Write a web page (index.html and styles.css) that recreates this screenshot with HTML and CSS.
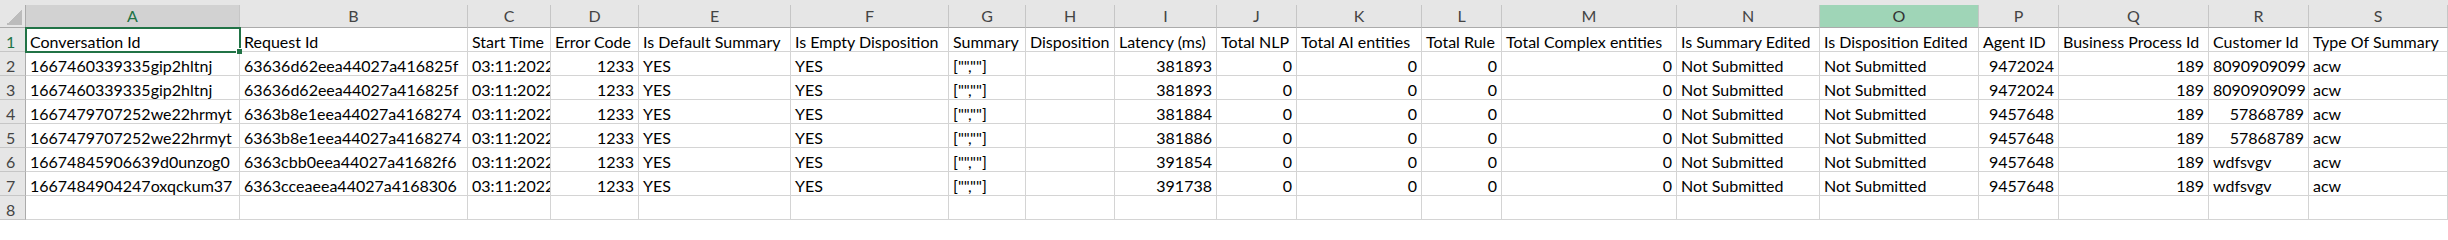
FILE: index.html
```html
<html>
<head>
  <meta charset="UTF-8">
  <title>Summary export</title>
  <link rel="stylesheet" href="styles.css">
</head>
<body>

<div class="sheet">
  <div class="row cols">
    <div class="corner"><span></span></div>
    <div class="cur">A</div><div>B</div><div>C</div><div>D</div><div>E</div><div>F</div><div>G</div><div>H</div><div>I</div><div>J</div>
    <div>K</div><div>L</div><div>M</div><div>N</div><div class="hl">O</div><div>P</div><div>Q</div><div>R</div><div>S</div>
  </div>

  <div class="row">
    <div class="rh cur">1</div>
    <div class="active">Conversation Id</div><div>Request Id</div><div>Start Time</div><div>Error Code</div><div>Is Default Summary</div>
    <div>Is Empty Disposition</div><div>Summary</div><div>Disposition</div><div>Latency (ms)</div><div>Total NLP</div>
    <div>Total AI entities</div><div>Total Rule</div><div>Total Complex entities</div><div>Is Summary Edited</div>
    <div>Is Disposition Edited</div><div>Agent ID</div><div>Business Process Id</div><div>Customer Id</div><div>Type Of Summary</div>
  </div>

  <div class="row">
    <div class="rh">2</div>
    <div>1667460339335gip2hltnj</div><div>63636d62eea44027a416825f</div><div>03:11:2022</div><div class="n">1233</div><div>YES</div>
    <div>YES</div><div>["",""]</div><div></div><div class="n">381893</div><div class="n">0</div>
    <div class="n">0</div><div class="n">0</div><div class="n">0</div><div>Not Submitted</div>
    <div>Not Submitted</div><div class="n">9472024</div><div class="n">189</div><div class="n">8090909099</div><div>acw</div>
  </div>

  <div class="row">
    <div class="rh">3</div>
    <div>1667460339335gip2hltnj</div><div>63636d62eea44027a416825f</div><div>03:11:2022</div><div class="n">1233</div><div>YES</div>
    <div>YES</div><div>["",""]</div><div></div><div class="n">381893</div><div class="n">0</div>
    <div class="n">0</div><div class="n">0</div><div class="n">0</div><div>Not Submitted</div>
    <div>Not Submitted</div><div class="n">9472024</div><div class="n">189</div><div class="n">8090909099</div><div>acw</div>
  </div>

  <div class="row">
    <div class="rh">4</div>
    <div>1667479707252we22hrmyt</div><div>6363b8e1eea44027a4168274</div><div>03:11:2022</div><div class="n">1233</div><div>YES</div>
    <div>YES</div><div>["",""]</div><div></div><div class="n">381884</div><div class="n">0</div>
    <div class="n">0</div><div class="n">0</div><div class="n">0</div><div>Not Submitted</div>
    <div>Not Submitted</div><div class="n">9457648</div><div class="n">189</div><div class="n">57868789</div><div>acw</div>
  </div>

  <div class="row">
    <div class="rh">5</div>
    <div>1667479707252we22hrmyt</div><div>6363b8e1eea44027a4168274</div><div>03:11:2022</div><div class="n">1233</div><div>YES</div>
    <div>YES</div><div>["",""]</div><div></div><div class="n">381886</div><div class="n">0</div>
    <div class="n">0</div><div class="n">0</div><div class="n">0</div><div>Not Submitted</div>
    <div>Not Submitted</div><div class="n">9457648</div><div class="n">189</div><div class="n">57868789</div><div>acw</div>
  </div>

  <div class="row">
    <div class="rh">6</div>
    <div>16674845906639d0unzog0</div><div>6363cbb0eea44027a41682f6</div><div>03:11:2022</div><div class="n">1233</div><div>YES</div>
    <div>YES</div><div>["",""]</div><div></div><div class="n">391854</div><div class="n">0</div>
    <div class="n">0</div><div class="n">0</div><div class="n">0</div><div>Not Submitted</div>
    <div>Not Submitted</div><div class="n">9457648</div><div class="n">189</div><div>wdfsvgv</div><div>acw</div>
  </div>

  <div class="row">
    <div class="rh">7</div>
    <div>1667484904247oxqckum37</div><div>6363cceaeea44027a4168306</div><div>03:11:2022</div><div class="n">1233</div><div>YES</div>
    <div>YES</div><div>["",""]</div><div></div><div class="n">391738</div><div class="n">0</div>
    <div class="n">0</div><div class="n">0</div><div class="n">0</div><div>Not Submitted</div>
    <div>Not Submitted</div><div class="n">9457648</div><div class="n">189</div><div>wdfsvgv</div><div>acw</div>
  </div>

  <div class="row">
    <div class="rh">8</div>
    <div></div><div></div><div></div><div></div><div></div><div></div><div></div><div></div><div></div><div></div>
    <div></div><div></div><div></div><div></div><div></div><div></div><div></div><div></div><div></div>
  </div>
</div>

</body>
</html>
```

FILE: styles.css
```css
body { margin: 0; padding: 0; background: #fff; color: #000; font: 16px/19px Lato, "Liberation Sans", sans-serif; }

.sheet { border-top: 5px solid #e6e6e6; }

.row {
  display: grid;
  grid-template-columns: 26px 214px 228px 83px 88px 152px 158px 77px 89px 102px 80px 125px 80px 175px 143px 159px 80px 150px 100px 139px;
  height: 24px;
}
.row > div {
  box-sizing: border-box;
  height: 24px;
  padding: 4px 4px 0 4px;
  border-right: 1px solid #d4d4d4;
  border-bottom: 1px solid #d4d4d4;
  white-space: nowrap;
  overflow: hidden;
}
.row > .n { text-align: right; }

/* column letters */
.cols { height: 23px; }
.cols > div {
  height: 23px;
  padding: 0;
  line-height: 22px;
  text-align: center;
  color: #444;
  background: #e6e6e6;
  border-right-color: #c6c6c6;
  border-bottom-color: #ababab;
}
.cols > .cur { background: #d2d2d2; color: #217346; }
.cols > .hl { background: #9fd5b7; color: #333; }

.cols > .corner {
  display: flex;
  justify-content: flex-end;
  align-items: flex-end;
  padding: 0 3px 2px 0;
  border-right-color: #ababab;
}
.corner span {
  display: block;
  width: 16px;
  height: 16px;
  background: linear-gradient(to bottom right, transparent 50%, #bcbcbc 50%);
}

/* row numbers */
.row > .rh {
  padding-left: 6px;
  color: #444;
  background: #e6e6e6;
  border-right-color: #ababab;
  border-bottom-color: #c6c6c6;
}
.row > .rh.cur { color: #217346; }

/* selected cell */
.row > .active {
  position: relative;
  outline: 2px solid #217346;
  outline-offset: -1px;
  overflow: visible;
}
.active::after {
  content: "";
  position: absolute;
  right: -3px;
  bottom: -3px;
  width: 5px;
  height: 5px;
  background: #217346;
  border: 1px solid #fff;
  border-right: 0;
  border-bottom: 0;
}
```
